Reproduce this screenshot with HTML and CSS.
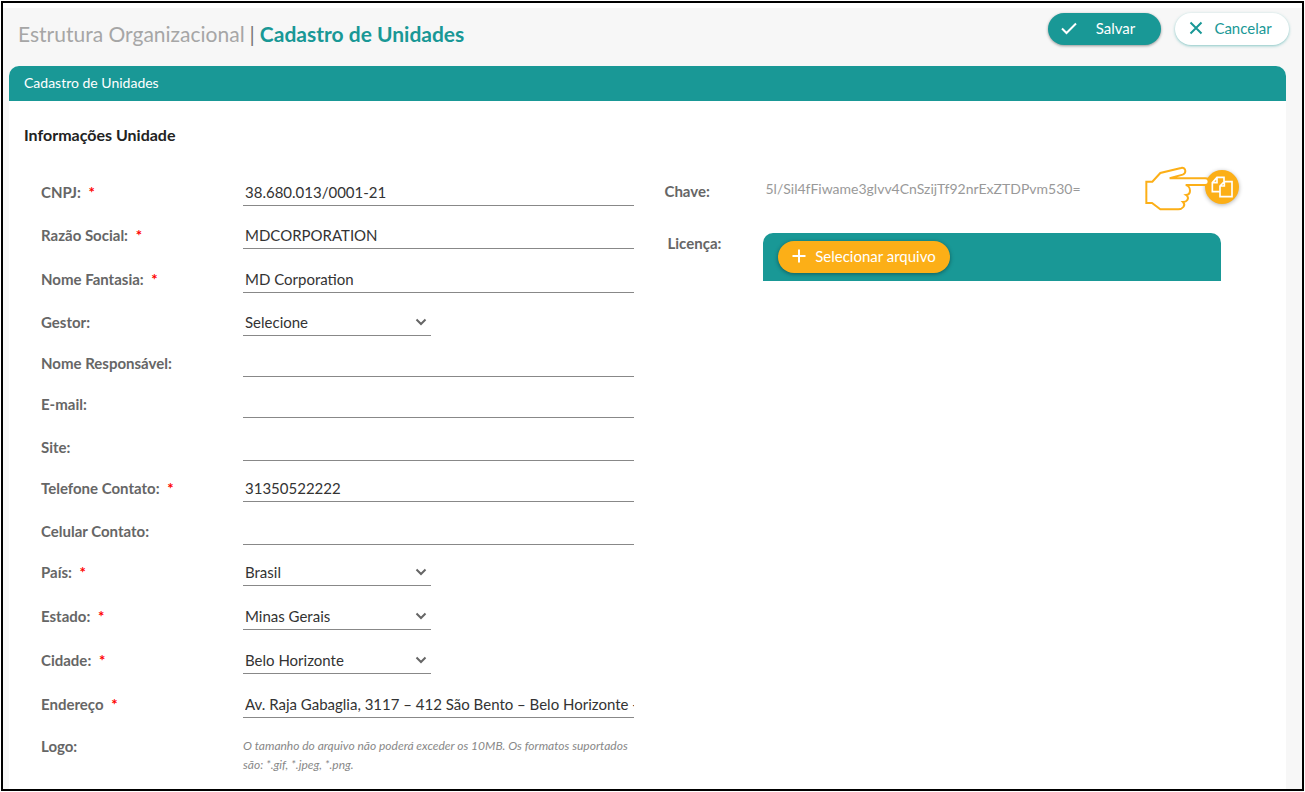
FILE: index.html
```html
<!DOCTYPE html>
<html lang="pt-BR">
<head>
<meta charset="utf-8">
<meta name="viewport" content="width=device-width, initial-scale=1">
<title>Cadastro de Unidades</title>
<link rel="stylesheet" href="styles.css">
</head>
<body>
<form class="page">
  <header class="topbar">
    <h1 class="title"><span class="title-section">Estrutura Organizacional</span><span class="title-divider">|</span><span class="title-page">Cadastro de Unidades</span></h1>
    <div class="actions">
      <button type="submit" class="btn btn-save">
        <svg class="btn-icon" viewBox="0 0 18 18" aria-hidden="true"><path d="M2 9.500l4.500 4.500L16 4.500"/></svg>
        <span class="btn-text">Salvar</span>
      </button>
      <button type="button" class="btn btn-cancel">
        <svg class="btn-icon" viewBox="0 0 18 18" aria-hidden="true"><path d="M3.500 3.500l11 11M14.500 3.500l-11 11"/></svg>
        <span class="btn-text">Cancelar</span>
      </button>
    </div>
  </header>

  <main class="panel">
    <h2 class="panel-header">Cadastro de Unidades</h2>
    <h3 class="section-title">Informações Unidade</h3>
    <div class="columns">
      <div class="fields">
        <div class="row row-mid">
          <label class="label" for="cnpj">CNPJ: <span class="required">*</span></label>
          <input class="control" id="cnpj" type="text" value="38.680.013/0001-21">
        </div>
        <div class="row row-mid">
          <label class="label" for="razao">Razão Social: <span class="required">*</span></label>
          <input class="control" id="razao" type="text" value="MDCORPORATION">
        </div>
        <div class="row">
          <label class="label" for="fantasia">Nome Fantasia: <span class="required">*</span></label>
          <input class="control" id="fantasia" type="text" value="MD Corporation">
        </div>
        <div class="row row-mid">
          <label class="label" for="gestor">Gestor:</label>
          <div class="picker">
            <select class="control" id="gestor"><option>Selecione</option></select>
            <svg class="chevron" viewBox="0 0 12 8" aria-hidden="true"><path d="M1.500 1.500L6 6l4.500-4.500"/></svg>
          </div>
        </div>
        <div class="row row-short">
          <label class="label" for="responsavel">Nome Responsável:</label>
          <input class="control" id="responsavel" type="text">
        </div>
        <div class="row row-short">
          <label class="label" for="email">E-mail:</label>
          <input class="control" id="email" type="email">
        </div>
        <div class="row row-mid">
          <label class="label" for="site">Site:</label>
          <input class="control" id="site" type="text">
        </div>
        <div class="row row-short">
          <label class="label" for="telefone">Telefone Contato: <span class="required">*</span></label>
          <input class="control" id="telefone" type="tel" value="31350522222">
        </div>
        <div class="row row-mid">
          <label class="label" for="celular">Celular Contato:</label>
          <input class="control" id="celular" type="tel">
        </div>
        <div class="row row-short">
          <label class="label" for="pais">País: <span class="required">*</span></label>
          <div class="picker">
            <select class="control" id="pais"><option>Brasil</option></select>
            <svg class="chevron" viewBox="0 0 12 8" aria-hidden="true"><path d="M1.500 1.500L6 6l4.500-4.500"/></svg>
          </div>
        </div>
        <div class="row">
          <label class="label" for="estado">Estado: <span class="required">*</span></label>
          <div class="picker">
            <select class="control" id="estado"><option>Minas Gerais</option></select>
            <svg class="chevron" viewBox="0 0 12 8" aria-hidden="true"><path d="M1.500 1.500L6 6l4.500-4.500"/></svg>
          </div>
        </div>
        <div class="row">
          <label class="label" for="cidade">Cidade: <span class="required">*</span></label>
          <div class="picker">
            <select class="control" id="cidade"><option>Belo Horizonte</option></select>
            <svg class="chevron" viewBox="0 0 12 8" aria-hidden="true"><path d="M1.500 1.500L6 6l4.500-4.500"/></svg>
          </div>
        </div>
        <div class="row">
          <label class="label" for="endereco">Endereço <span class="required">*</span></label>
          <input class="control" id="endereco" type="text" value="Av. Raja Gabaglia, 3117 – 412 São Bento – Belo Horizonte - MG">
        </div>
        <div class="row row-note">
          <span class="label">Logo:</span>
          <p class="note">O tamanho do arquivo não poderá exceder os 10MB. Os formatos suportados são: *.gif, *.jpeg, *.png.</p>
        </div>
      </div>

      <div class="license">
        <div class="key-row">
          <span class="label">Chave:</span>
          <output class="key">5l/Sil4fFiwame3glvv4CnSzijTf92nrExZTDPvm530=</output>
          <div class="copy">
            <button type="button" class="copy-btn" aria-label="Copiar chave">
              <svg class="copy-icon" viewBox="0 0 66 66" aria-hidden="true"><path d="M25 47H4V20L18 4h21v12M18 4v16H4M40 17h23v45H27V30zv13H27"/></svg>
            </button>
            <svg class="hand" viewBox="76 50 195 138" aria-hidden="true"><path d="M80 97H98L122 71 184 56C191 54 197 58 197 65 197 71 194 74 189 76L150 87H257C264 87 267 92 267 97S264 107 257 107H198C205 108 211 115 211 124 211 131 206 136 199 137 205 141 206 147 203 152 200 157 196 158 190 158 195 163 194 169 191 173 187 178 181 180 176 180H122L97 161H80Z"/></svg>
          </div>
        </div>
        <div class="file-row">
          <span class="label" id="licenca">Licença:</span>
          <div class="upload">
            <button type="button" class="btn btn-file" aria-describedby="licenca">
              <svg class="btn-icon" viewBox="0 0 18 18" aria-hidden="true"><path d="M9 2.500v13M2.500 9h13"/></svg>
              <span class="btn-text">Selecionar arquivo</span>
            </button>
          </div>
        </div>
      </div>
    </div>
  </main>
</form>
</body>
</html>
```

FILE: styles.css
```css
* { box-sizing: border-box; }

body {
  margin: 1px;
  background: #fff;
  color: #222;
  font-family: "Lato", "Open Sans", sans-serif;
  font-size: 15px;
  line-height: 20px;
}

button, input, select { font: inherit; color: inherit; }

.page {
  display: flex;
  flex-direction: column;
  min-height: calc(100vh - 2px);
  padding-top: 5px;
  border: 2px solid #000;
  background: linear-gradient(#fff 5px, #f7f7f7 5px);
}

/* Top bar */
.topbar {
  display: flex;
  justify-content: space-between;
  align-items: flex-start;
  padding: 5px 13px 0 15px;
  height: 58px;
}

.title {
  display: flex;
  gap: 5px;
  margin: 7px 0 0;
  font-size: 21px;
  line-height: 28px;
  font-weight: 400;
}

.title-section { color: #a6a6a6; }
.title-divider { color: #777; }
.title-page { color: #199896; font-weight: 700; }

.actions { display: flex; gap: 14px; }

.btn {
  display: flex;
  align-items: center;
  height: 32px;
  padding: 0 12px 2px;
  border: 0;
  border-radius: 16px;
  color: #fff;
  white-space: nowrap;
}

.btn-icon {
  flex: none;
  width: 18px;
  height: 18px;
  fill: none;
  stroke: currentColor;
  stroke-width: 2;
}

.btn-text { flex: 1; padding-left: 4px; text-align: center; }

.btn-save {
  width: 113px;
  background: #199896;
  box-shadow: 0 1px 3px rgba(0, 0, 0, .4);
}

.btn-cancel {
  width: 114px;
  background: #fff;
  color: #199896;
  box-shadow: 0 1px 3px rgba(25, 152, 150, .5);
}

.btn-file {
  width: 172px;
  background: #fcaf17;
  box-shadow: 0 1px 4px rgba(0, 0, 0, .4);
}

/* Panel */
.panel {
  flex: 1;
  margin: 0 16px 0 6px;
  border-radius: 10px 10px 0 0;
  background: #fff;
}

.panel-header {
  margin: 0;
  padding: 7px 15px 8px;
  border-radius: 10px 10px 0 0;
  background: #199896;
  color: #fff;
  font-size: 14px;
  line-height: 20px;
  font-weight: 400;
}

.section-title {
  margin: 0;
  padding: 24px 15px 0;
  font-size: 16px;
  line-height: 20px;
  font-weight: 700;
}

.columns {
  display: grid;
  grid-template-columns: minmax(0, 594fr) minmax(0, 575fr);
  gap: 30px;
  padding: 18px 47px 0 32px;
}

/* Form rows */
.row {
  display: grid;
  grid-template-columns: 202px minmax(0, 1fr);
  align-items: end;
  height: 44px;
}

.row-mid { height: 43px; }
.row-short { height: 41px; }

.label {
  padding-bottom: 4px;
  color: #666;
  font-size: 15px;
  line-height: 20px;
  font-weight: 700;
}

.required {
  margin-left: 4px;
  color: #f00;
}

.control {
  width: 100%;
  height: 28px;
  padding: 0 0 0 2px;
  border: 0;
  border-bottom: 1px solid #888;
  border-radius: 0;
  outline: 0;
  background: transparent;
  color: #333;
  appearance: none;
}

.picker {
  display: grid;
  align-items: center;
  width: 48%;
}

.picker .control, .chevron { grid-area: 1 / 1; }

.chevron {
  justify-self: end;
  width: 12px;
  height: 8px;
  margin-right: 4px;
  fill: none;
  stroke: #666;
  stroke-width: 2;
  pointer-events: none;
}

.row-note {
  align-items: start;
  height: auto;
  padding-top: 18px;
}

.note {
  margin: 0;
  color: #888;
  font-size: 12px;
  line-height: 19px;
  font-style: italic;
}

/* License column */
.key-row, .file-row {
  display: grid;
  grid-template-columns: 99px minmax(0, 1fr) auto;
}

.key-row {
  align-items: center;
  padding-top: 7px;
}

.key-row .label { padding: 8px 0 0; }

.key {
  padding: 4px 0 0 2px;
  color: #999;
  font-size: 14px;
}

.copy { position: relative; }

.copy-btn {
  display: grid;
  place-items: center;
  width: 34px;
  height: 34px;
  padding: 0;
  border: 0;
  border-radius: 50%;
  background: #fcaf17;
  box-shadow: 0 1px 4px rgba(0, 0, 0, .3);
}

.copy-icon {
  width: 22px;
  height: 22px;
  fill: none;
  stroke: #fff;
  stroke-width: 5;
}

.hand {
  position: absolute;
  top: -4px;
  right: 29px;
  width: 65px;
  height: 46px;
  fill: #fff;
  stroke: #fcaf17;
  stroke-width: 6;
  pointer-events: none;
}

.file-row {
  padding: 29px 18px 0 0;
}

.file-row .label { padding: 0 0 0 3px; }

.upload {
  padding: 8px 15px;
  border-radius: 10px 10px 0 0;
  background: #199896;
}
```
